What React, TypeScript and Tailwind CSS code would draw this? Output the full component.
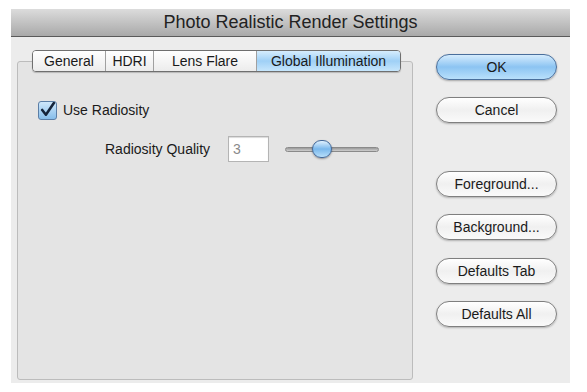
import React from 'react';

const font = { fontFamily: '"Liberation Sans", Arial, sans-serif' };

function AquaButton({ label, primary = false }: { label: string; primary?: boolean }) {
  return (
    <div
      className={
        primary
          ? 'flex h-[26px] w-[121px] items-center justify-center rounded-full border border-[#4a6f9c] bg-gradient-to-b from-[#d5ecfd] via-[#8cc4f2] to-[#b9e0fb] text-[14px] text-[#1a1a1a] shadow-[0_1px_2px_rgba(0,0,0,0.3)]'
          : 'flex h-[26px] w-[121px] items-center justify-center rounded-full border border-[#7f7f7f] bg-gradient-to-b from-[#ffffff] via-[#f0f0f0] to-[#fafafa] text-[14px] text-[#1a1a1a] shadow-[0_1px_2px_rgba(0,0,0,0.25)]'
      }
    >
      {label}
    </div>
  );
}

const tabs = [
  { label: 'General', w: 'w-[72px]' },
  { label: 'HDRI', w: 'w-[48px]' },
  { label: 'Lens Flare', w: 'w-[103px]' },
  { label: 'Global Illumination', w: 'w-[144px]', active: true },
];

export default function App() {
  return (
    <div className="h-[392px] w-[587px] bg-white pl-[11px] pt-[9px]" style={font}>
      <div className="flex h-[374px] w-[559px] flex-col bg-[#ececec]">
        {/* title bar */}
        <div className="flex h-[28px] items-center justify-center border-b border-[#5a5a5a] bg-gradient-to-b from-[#dcdcdc] to-[#a9a9a9] text-[18px] text-[#222]">
          Photo Realistic Render Settings
        </div>

        <div className="flex flex-1">
          {/* left: tab view */}
          <div className="flex flex-col pl-[6px] pt-[13px]">
            <div className="relative z-10 ml-[15px] flex h-[22px] w-fit overflow-hidden rounded-[4px] border border-[#6f6f6f] text-[14px] text-[#1a1a1a] shadow-[0_1px_1px_rgba(0,0,0,0.2)]">
              {tabs.map((t, i) => (
                <div
                  key={t.label}
                  className={
                    (t.active
                      ? 'bg-gradient-to-b from-[#d6edfd] via-[#9fd0f6] to-[#c6e6fc] '
                      : 'bg-gradient-to-b from-[#ffffff] to-[#ececec] ') +
                    (i > 0 ? 'border-l border-[#a0a0a0] ' : '') +
                    'flex items-center justify-center ' +
                    t.w
                  }
                >
                  {t.label}
                </div>
              ))}
            </div>
            <div className="-mt-[11px] h-[319px] w-[396px] rounded-[3px] border border-[#bcbcbc] bg-[#e4e4e4] pl-[20px] pt-[38px] text-[14px] text-[#1a1a1a]">
              <div className="flex items-center gap-[6px]">
                <div className="flex h-[19px] w-[19px] items-center justify-center rounded-[3px] border border-[#5b7ea6] bg-gradient-to-b from-[#cfe8fb] to-[#86bdea]">
                  <svg width="17" height="17" viewBox="0 0 16 16">
                    <path d="M3 7.5 L6.5 12 L14 1" fill="none" stroke="#15243a" strokeWidth="2.4" strokeLinecap="round" strokeLinejoin="round" />
                  </svg>
                </div>
                <span>Use Radiosity</span>
              </div>
              <div className="mt-[15px] flex items-center">
                <span className="ml-[67px] w-[110px] whitespace-nowrap">Radiosity Quality</span>
                <div className="ml-[13px] flex h-[26px] w-[41px] items-center border border-[#b4b4b4] bg-white pl-[4px] text-[#8a8a8a] shadow-[inset_0_1px_1px_rgba(0,0,0,0.15)]">
                  3
                </div>
                <div className="relative ml-[16px] flex h-[20px] w-[94px] items-center">
                  <div className="h-[5px] w-full rounded-full border border-[#8a8a8a] bg-gradient-to-b from-[#9a9a9a] to-[#cfcfcf]" />
                  <div className="absolute left-[27px] top-[1px] h-[18px] w-[20px] rounded-full border border-[#44699a] bg-gradient-to-b from-[#e0f1fe] via-[#7ab8ec] to-[#b6def9] shadow-[0_1px_2px_rgba(0,0,0,0.35)]" />
                </div>
              </div>
            </div>
          </div>

          {/* right: buttons */}
          <div className="ml-[23px] flex flex-col pt-[17px]">
            <AquaButton label="OK" primary />
            <div className="mt-[17px]">
              <AquaButton label="Cancel" />
            </div>
            <div className="mt-[48px]">
              <AquaButton label="Foreground..." />
            </div>
            <div className="mt-[17px]">
              <AquaButton label="Background..." />
            </div>
            <div className="mt-[18px]">
              <AquaButton label="Defaults Tab" />
            </div>
            <div className="mt-[17px]">
              <AquaButton label="Defaults All" />
            </div>
          </div>
        </div>
      </div>
    </div>
  );
}
